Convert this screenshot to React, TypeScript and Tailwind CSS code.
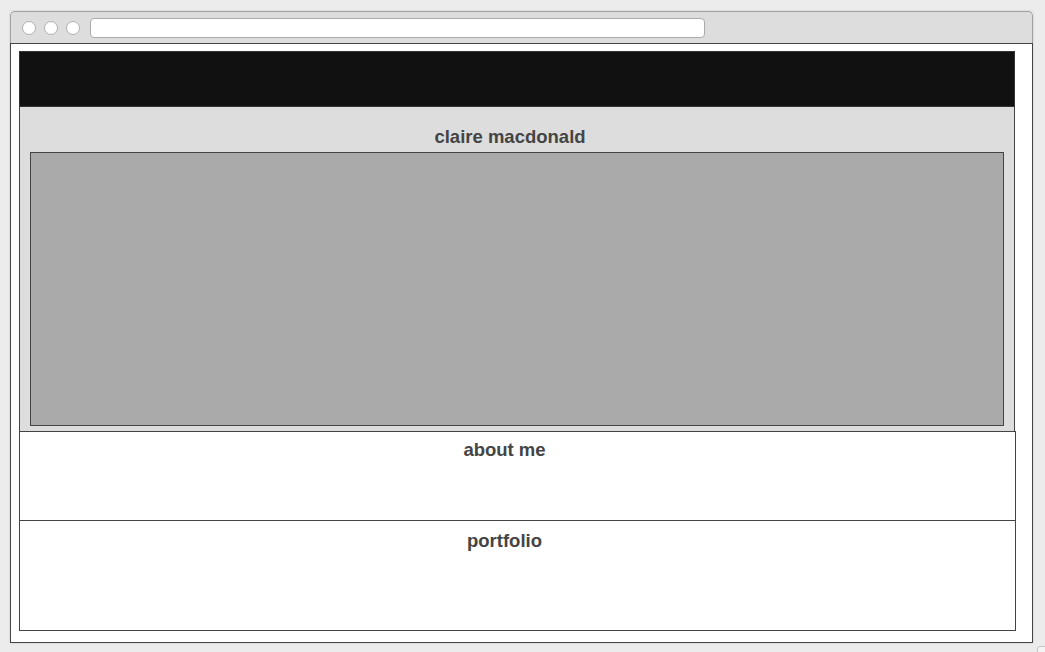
export default function App() {
  return (
    <div
      className="relative h-[652px] w-[1045px] overflow-hidden bg-[#ececec] pl-[10px] pt-[11px]"
      style={{ fontFamily: '"Liberation Sans", Arial, sans-serif' }}
    >
      <div className="flex h-[632px] w-[1023px] flex-col shadow-[0_0_2px_rgba(0,0,0,0.15)]">
        {/* title bar */}
        <div className="flex h-[32px] shrink-0 items-center gap-[8px] rounded-t-[5px] border-x border-t border-[#a0a0a0] bg-[#dddddd] pl-[11px]">
          <span className="h-[14px] w-[14px] rounded-full border border-[#b0b0b0] bg-white" />
          <span className="h-[14px] w-[14px] rounded-full border border-[#b0b0b0] bg-white" />
          <span className="h-[14px] w-[14px] rounded-full border border-[#b0b0b0] bg-white" />
          <span className="ml-[2px] h-[20px] w-[615px] rounded-[4px] border border-[#aaaaaa] bg-white" />
        </div>

        {/* page */}
        <div className="flex-1 border border-[#444444] bg-white pl-[8px] pt-[7px]">
          <div className="h-[56px] w-[996px] border border-[#333333] bg-[#111111]" />

          <section className="h-[324px] w-[996px] border-x border-[#444444] bg-[#dddddd] px-[10px] pt-[19px]">
            <h1 className="pr-[14px] text-center text-[18.5px] font-bold leading-[22px] text-[#444444]">
              claire macdonald
            </h1>
            <div className="mt-[4px] h-[274px] w-[974px] border border-[#444444] bg-[#aaaaaa]" />
          </section>

          <section className="h-[89px] w-[997px] border-x border-t border-[#444444] pt-[7px]">
            <h2 className="pr-[26px] text-center text-[18.5px] font-bold leading-[22px] text-[#444444]">
              about me
            </h2>
          </section>

          <section className="h-[111px] w-[997px] border border-[#444444] pt-[9px]">
            <h2 className="pr-[26px] text-center text-[18.5px] font-bold leading-[22px] text-[#444444]">
              portfolio
            </h2>
          </section>
        </div>
      </div>

      <div className="absolute left-[1037px] top-[646px] h-[20px] w-[20px] rounded-[3px] border border-[#c4c4c4] bg-[#f4f4f4]" />
    </div>
  );
}
